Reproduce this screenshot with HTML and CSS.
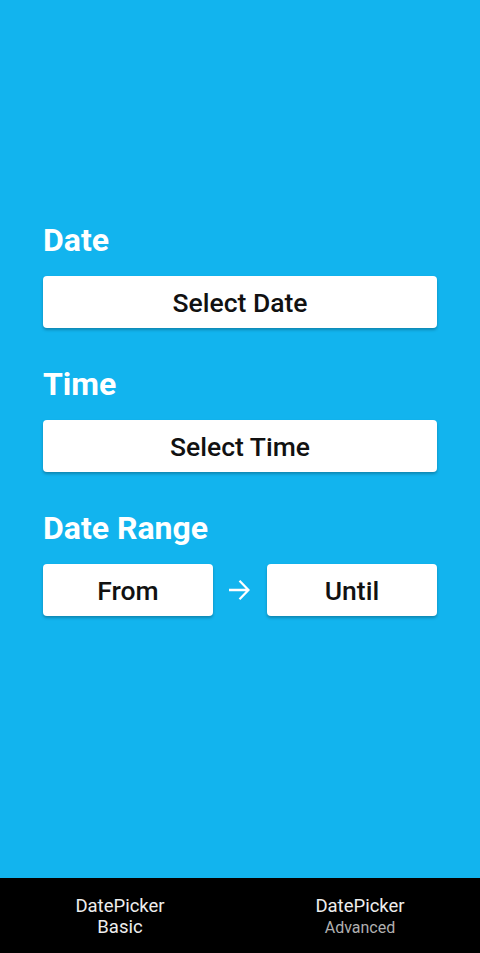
FILE: index.html
```html
<!DOCTYPE html>
<html>
<head>
<meta charset="utf-8">
<link rel="stylesheet" href="styles.css">
</head>
<body>
<div class="app">
  <main class="content">
    <section class="section">
      <h2 class="label">Date</h2>
      <button class="btn">Select Date</button>
    </section>
    <section class="section">
      <h2 class="label">Time</h2>
      <button class="btn">Select Time</button>
    </section>
    <section class="section">
      <h2 class="label">Date Range</h2>
      <div class="range">
        <button class="btn">From</button>
        <svg class="arrow" viewBox="0 0 22 22" width="22" height="22"><path d="M1 11H20.5M11.5 1.8L20.5 11L11.5 20.2" fill="none" stroke="#fff" stroke-width="2.3"/></svg>
        <button class="btn">Until</button>
      </div>
    </section>
  </main>
  <nav class="tabs">
    <div class="tab active"><span>DatePicker</span><span>Basic</span></div>
    <div class="tab"><span>DatePicker</span><span class="sub">Advanced</span></div>
  </nav>
</div>
</body>
</html>
```
FILE: styles.css
```css
html, body {
  margin: 0;
  padding: 0;
  height: 100%;
}
body {
  font-family: Roboto, "Liberation Sans", sans-serif;
  background: #12b4ee;
}
.app {
  display: flex;
  flex-direction: column;
  height: 953px;
}
.content {
  flex: 1;
  padding: 222px 43px 0 43px;
  display: flex;
  flex-direction: column;
  gap: 38px;
}
.section {
  display: flex;
  flex-direction: column;
  gap: 17px;
}
.label {
  margin: 0;
  color: #fff;
  font-size: 32px;
  line-height: 37px;
  font-weight: 700;
}
.btn {
  height: 52px;
  border: none;
  border-radius: 4px;
  background: #fff;
  color: #111;
  font-family: Roboto, "Liberation Sans", sans-serif;
  font-size: 26.5px;
  font-weight: 500;
  padding: 0;
  box-shadow: 0 2px 3px rgba(0,0,0,0.25);
}
.range {
  display: flex;
  align-items: center;
}
.range .btn {
  flex: 1;
}
.arrow {
  margin: 0 17px 0 15px;
}
.tabs {
  height: 75px;
  background: #000;
  display: flex;
}
.tab {
  flex: 1;
  display: flex;
  flex-direction: column;
  align-items: center;
  justify-content: center;
  color: #eee;
  font-size: 18.5px;
  line-height: 21px;
  padding-top: 2px;
}
.tab .sub {
  font-size: 16px;
  color: #b0b0b0;
}
```
